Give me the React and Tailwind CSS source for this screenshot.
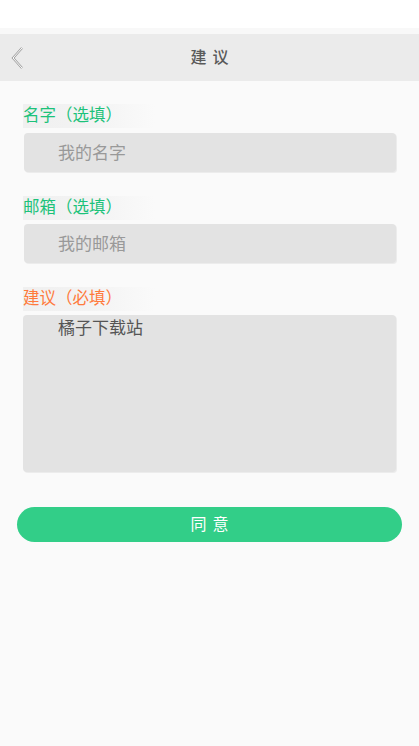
import React from "react";

const font = { fontFamily: '"Noto Sans CJK SC", "Noto Sans", sans-serif' };

function Label({ text, color }) {
  return (
    <div className="h-[24px] w-[132px] flex items-center pb-[3px] text-[16.5px] leading-none bg-gradient-to-r from-[#f0f0f0] via-[#f3f3f3] to-[#fafafa]" style={{ color }}>
      {text}
    </div>
  );
}

export default function App() {
  return (
    <div className="w-[419px] h-[746px] bg-[#fafafa] flex flex-col" style={font}>
      <div className="h-[28px] bg-white" />
      <div className="h-[6px] bg-[#f8f8f8]" />
      <div className="h-[47px] bg-[#ebebeb] flex items-center relative">
        <svg className="absolute left-[10px] top-[12px]" width="16" height="24" viewBox="0 0 16 24">
          <polyline points="12,2 3,12 12,22" fill="none" stroke="#9a9a9a" strokeWidth="2.2" />
          <polyline points="12,2 3,12 12,22" fill="none" stroke="#ffffff" strokeWidth="1" />
        </svg>
        <div className="flex-1 text-center text-[16px] leading-none pb-[4px] text-[#5a5a5a] font-medium tracking-[6px] pl-[6px]">建议</div>
      </div>
      <div className="flex flex-col px-[23px] pt-[23px]">
        <Label text="名字（选填）" color="#1cc27a" />
        <div className="mt-[5px] ml-[1px] h-[39px] rounded-[4px] bg-[#e3e3e3] shadow-[1px_1px_0_#ececec] flex items-center pl-[34px] pb-[3px] leading-none text-[17px] text-[#999]">我的名字</div>
        <div className="mt-[24px]"><Label text="邮箱（选填）" color="#1cc27a" /></div>
        <div className="mt-[4px] ml-[1px] h-[39px] rounded-[4px] bg-[#e3e3e3] shadow-[1px_1px_0_#ececec] flex items-center pl-[34px] pb-[3px] leading-none text-[17px] text-[#999]">我的邮箱</div>
        <div className="mt-[24px]"><Label text="建议（必填）" color="#ff7a3c" /></div>
        <div className="mt-[4px] h-[157px] rounded-[4px] bg-[#e3e3e3] shadow-[1px_1px_0_#ececec] pl-[35px] pt-[3px] text-[17px] text-[#555] leading-none">橘子下载站</div>
      </div>
      <div className="px-[17px] mt-[35px]">
        <div className="h-[35px] rounded-full bg-[#32ce88] flex items-center justify-center pb-[3px] leading-none text-white text-[16px] tracking-[6px] pl-[6px]">同意</div>
      </div>
    </div>
  );
}
